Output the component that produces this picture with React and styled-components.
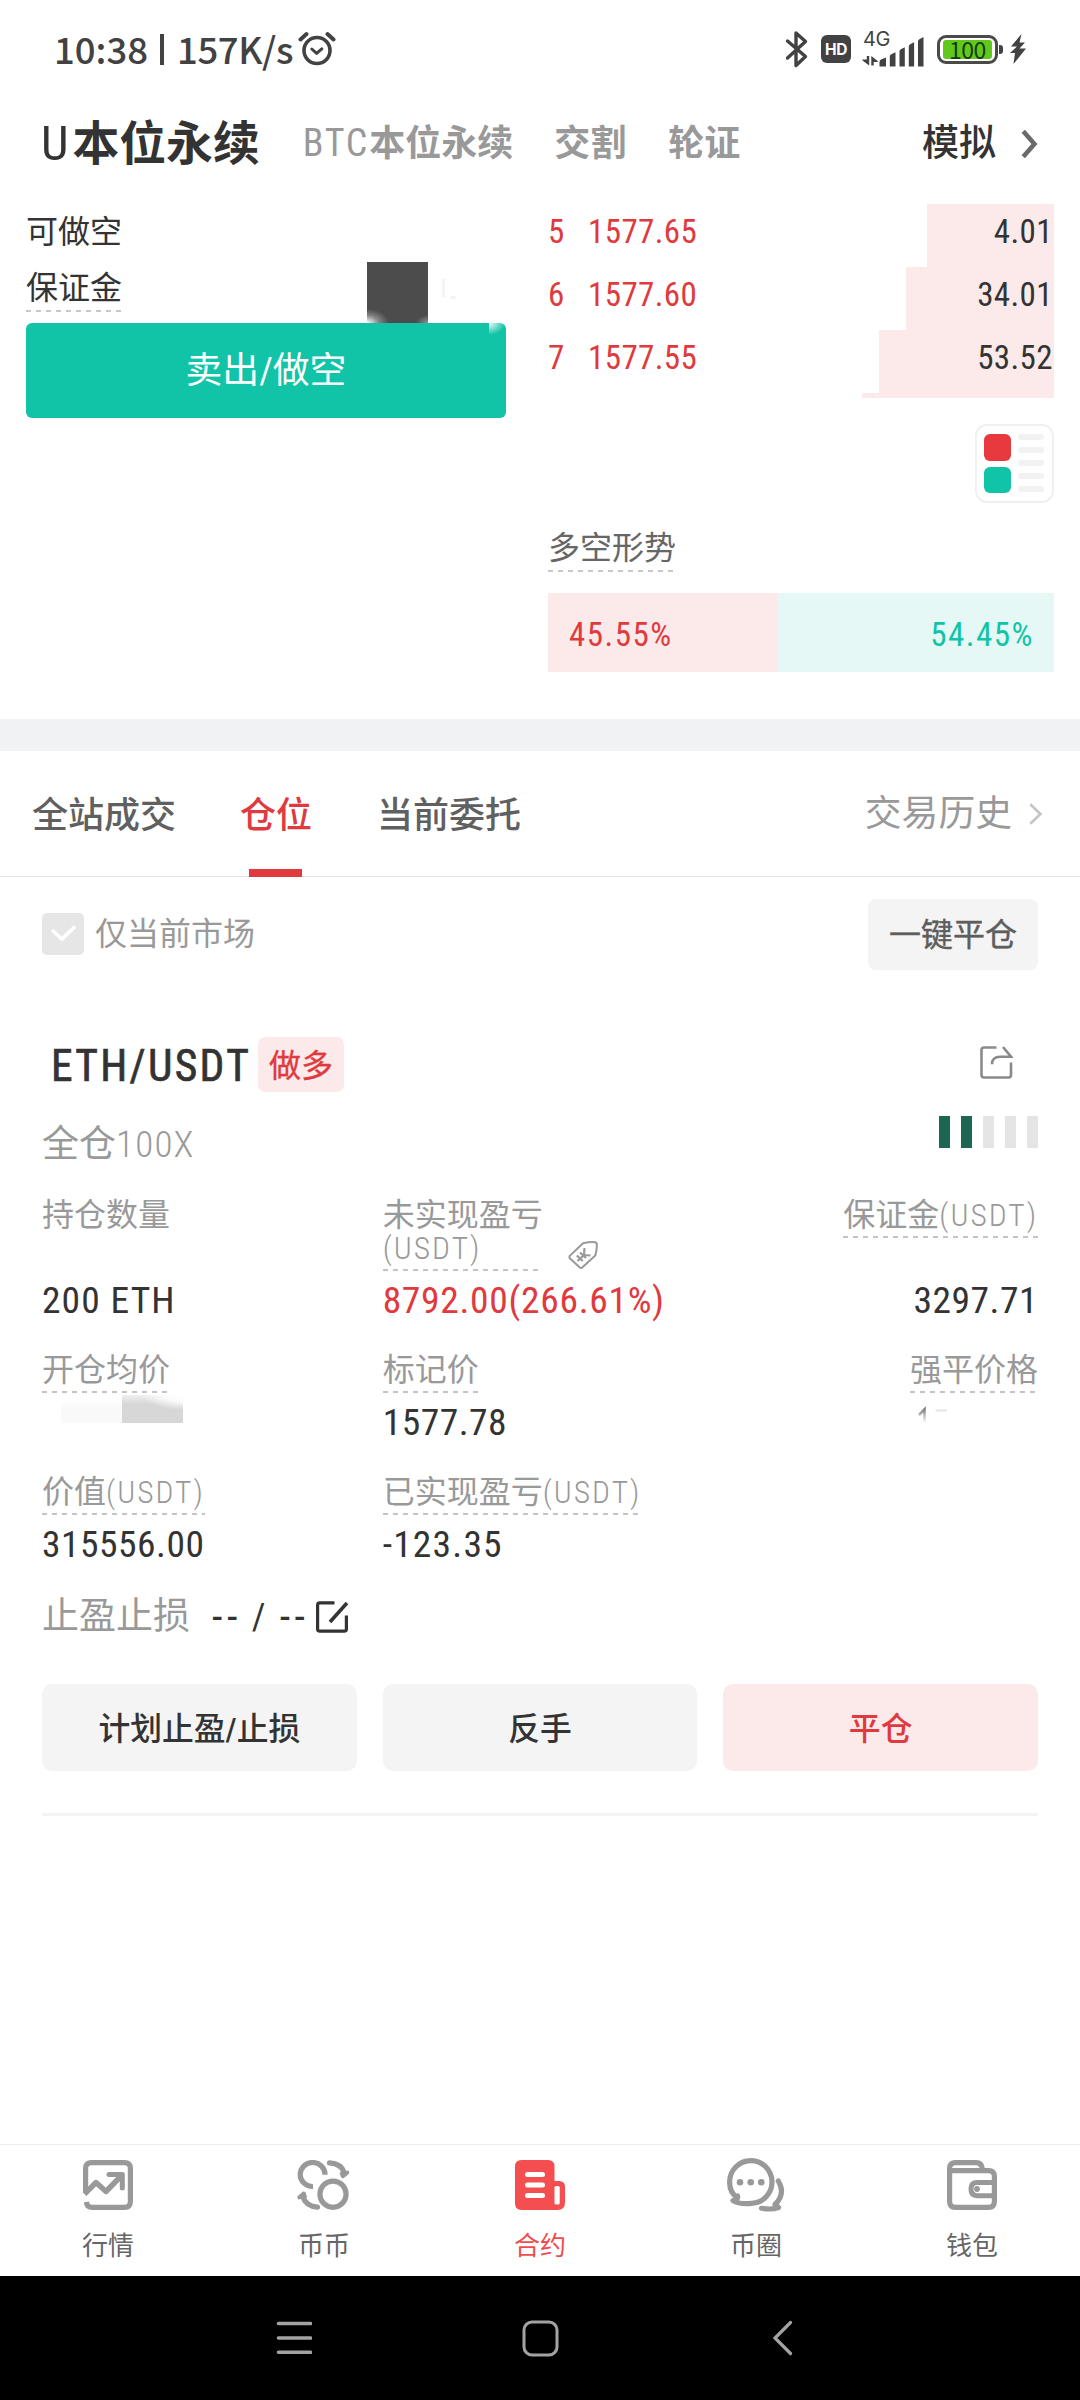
import React from "react";
import styled, { createGlobalStyle } from "styled-components";

const GlobalStyle = createGlobalStyle`
  *, *::before, *::after { box-sizing: border-box; }
  body {
    margin: 0;
    background: #fff;
    font-family: "Roboto Condensed", Roboto, "Noto Sans CJK SC", sans-serif;
  }
`;

const ink = "#333";
const mid = "#666";
const soft = "#999";
const red = "#e0393e";
const redTint = "#fceaea";
const green = "#11c4a7";
const greenTint = "#e5f8f5";

const Screen = styled.div`
  width: 1080px;
  height: 2400px;
  display: flex;
  flex-direction: column;
  background: #fff;
  color: ${ink};
  overflow: hidden;
`;

const Lat = styled.span`
  font-family: "Roboto Condensed", Roboto, sans-serif;
  font-weight: ${(p) => p.$w || 400};
  font-size: ${(p) => (p.$s ? `${p.$s}px` : "inherit")};
  letter-spacing: ${(p) => p.$ls || 0}px;
`;

/* ---------- status bar ---------- */

const StatusBar = styled.div`
  height: 98px;
  flex: none;
  display: flex;
  align-items: center;
  justify-content: space-between;
  padding: 0 54px 0 54px;
  color: #424242;
`;

const StatusLeft = styled.div`
  display: flex;
  align-items: center;
  font-family: "Noto Sans CJK SC", sans-serif;
  font-weight: 500;
  font-size: 36.5px;
  line-height: 50px;
`;

const Clock = styled.span`
  width: 105px;
`;

const Divider = styled.span`
  width: 4px;
  height: 31px;
  background: #424242;
  margin-right: 13px;
  margin-left: 1px;
`;

const Speed = styled.span`
  letter-spacing: -0.4px;
  width: 121px;
`;

const StatusRight = styled.div`
  display: flex;
  align-items: center;
  height: 40px;
`;

const HdBadge = styled.div`
  width: 30px;
  height: 28px;
  margin-left: 12px;
  border-radius: 6px;
  background: #424242;
  color: #fff;
  font: 700 15.5px/29px Inter, sans-serif;
  text-align: center;
  letter-spacing: -0.3px;
`;

const Network = styled.div`
  width: 62px;
  height: 36px;
  margin-left: 11px;
  position: relative;
`;

const NetworkType = styled.span`
  position: absolute;
  left: 1px;
  top: -2px;
  font: 400 20px/20px Inter, sans-serif;
  letter-spacing: -0.5px;
`;

const Battery = styled.div`
  width: 61px;
  height: 29px;
  margin-left: 13px;
  border: 3px solid #4a4a4a;
  border-radius: 9px;
  padding: 2px 3px;
`;

const BatteryFill = styled.div`
  height: 19px;
  border-radius: 3px;
  background: #63c81e;
  color: #143c08;
  font: 400 23px/18px "Noto Sans CJK SC", sans-serif;
  text-align: center;
  letter-spacing: -0.5px;
`;

const BatteryTip = styled.div`
  width: 4px;
  height: 9px;
  margin: 0 7px 0 1px;
  border-radius: 0 3px 3px 0;
  background: #424242;
`;

/* ---------- market header ---------- */

const Header = styled.div`
  height: 106px;
  flex: none;
  display: flex;
  align-items: center;
  padding: 0 41px 15px 41px;
`;

const MarketTab = styled.div`
  font-size: ${(p) => (p.$active ? 46.800 : 36)}px;
  line-height: 60px;
  font-weight: 700;
  color: ${(p) => (p.$active ? ink : soft)};
  margin-right: ${(p) => p.$gap}px;
  white-space: nowrap;
`;

const Simulate = styled.div`
  margin-left: auto;
  display: flex;
  align-items: center;
  gap: 25px;
  font-size: 37px;
  line-height: 60px;
  font-weight: 500;
`;

/* ---------- trade area ---------- */

const Trade = styled.div`
  height: 515px;
  flex: none;
  display: flex;
  justify-content: space-between;
  padding: 0 26px;
`;

const OrderForm = styled.div`
  width: 480px;
`;

const FormRow = styled.div`
  height: ${(p) => p.$h}px;
  display: flex;
  justify-content: space-between;
  align-items: flex-start;
  padding-top: ${(p) => p.$pt || 0}px;
`;

const dashes = (color) =>
  `repeating-linear-gradient(90deg, ${color} 0 5px, transparent 5px 10px)`;

const FieldLabel = styled.div`
  margin-top: ${(p) => p.$mt || 0}px;
  font-size: 32px;
  line-height: 45px;
  color: ${(p) => p.$color || ink};
  padding-bottom: 1px;
  background: ${(p) => (p.$dashed ? dashes("#c8c8c8") : "none")} left bottom / 100% 2px no-repeat;
`;

const Redacted = styled.div`
  width: 139px;
  height: 61px;
  display: flex;
  align-items: flex-start;
`;

const RedactedBlock = styled.div`
  width: 61px;
  height: 61px;
  background:
    radial-gradient(ellipse 22px 14px at 0 100%, #fff 0, rgba(255, 255, 255, 0.3) 55%, transparent 100%),
    radial-gradient(ellipse 12px 8px at 100% 100%, rgba(255, 255, 255, 0.4) 0, transparent 100%),
    #4c4c4c;
`;

const Smudge = styled.div`
  width: 3px;
  height: 20px;
  margin: 16px 0 0 14px;
  border-radius: 2px;
  background: #f5f5f5;
`;

const SmudgeDot = styled.div`
  width: 6px;
  height: 3px;
  margin: 34px 0 0 5px;
  border-radius: 2px;
  background: #f3f3f3;
`;

const SellButton = styled.button`
  display: block;
  width: 480px;
  height: 95px;
  border: 0;
  border-radius: 6px;
  background:
    radial-gradient(ellipse 16px 12px at 0 0, rgba(255, 255, 255, 0.95), rgba(255, 255, 255, 0) 100%) 463px 0 / 17px 13px no-repeat,
    ${green};
  color: #fff;
  font: 400 36.800px/96px "Roboto Condensed", "Noto Sans CJK SC", sans-serif;
  padding: 0;
`;

const Book = styled.div`
  width: 506px;
  display: flex;
  flex-direction: column;
`;

const DepthRow = styled.div`
  height: 63px;
  display: flex;
  align-items: center;
  padding: 0 1px 8px 0;
  background: linear-gradient(${redTint}, ${redTint}) right top / ${(p) => p.$depth}px 100% no-repeat;
  font-size: 33px;
  line-height: 44px;
  letter-spacing: 0.4px;
`;

const DepthLevel = styled.span`
  width: 40px;
  color: ${red};
`;

const DepthPrice = styled.span`
  color: ${red};
`;

const DepthAmount = styled.span`
  margin-left: auto;
`;

const DepthSliver = styled.div`
  width: 192px;
  height: 5px;
  align-self: flex-end;
  background: ${redTint};
`;

const DepthMode = styled.div`
  width: 79px;
  height: 79px;
  margin: 26px 0 23px;
  align-self: flex-end;
  border: 2px solid #f0f0f0;
  border-radius: 12px;
  display: flex;
  justify-content: space-between;
  padding: 8px 8px 8px 7px;
`;

const ModeColumn = styled.div`
  width: 27px;
  display: flex;
  flex-direction: column;
  gap: 6px;
`;

const ModeSquare = styled.div`
  height: 27px;
  border-radius: 6px;
  background: ${(p) => p.$color};
`;

const ModeLines = styled.div`
  width: 26px;
  display: flex;
  flex-direction: column;
  gap: 7px;
`;

const ModeLine = styled.div`
  height: 6px;
  border-radius: 3px;
  background: #f2f2f2;
`;

const Ratio = styled.div`
  height: 79px;
  margin-top: 21px;
  display: flex;
  font-size: 33px;
  line-height: 84px;
  letter-spacing: 1.5px;
`;

const RatioLong = styled.div`
  width: 45.55%;
  padding-left: 21px;
  background: ${redTint};
  color: ${red};
`;

const RatioShort = styled.div`
  flex: 1;
  padding-right: 20px;
  text-align: right;
  background: ${greenTint};
  color: ${green};
`;

/* ---------- position tabs ---------- */

const Band = styled.div`
  height: 32px;
  flex: none;
  background: #f1f2f4;
`;

const Tabs = styled.div`
  height: 126px;
  flex: none;
  display: flex;
  align-items: stretch;
  padding: 0 37px 0 32px;
  border-bottom: 1px solid #e3e3e3;
`;

const Tab = styled.div`
  position: relative;
  margin-right: ${(p) => p.$gap}px;
  font-size: 36px;
  font-weight: 500;
  line-height: 130px;
  color: ${(p) => (p.$active ? red : "#606060")};
  &::after {
    content: "";
    display: ${(p) => (p.$active ? "block" : "none")};
    position: absolute;
    left: 9px;
    bottom: -1px;
    width: 53px;
    height: 8px;
    background: ${red};
  }
`;

const History = styled.div`
  margin-left: auto;
  display: flex;
  align-items: center;
  gap: 17px;
  font-size: 36.8px;
  line-height: 130px;
  color: ${soft};
`;

/* ---------- position list ---------- */

const Filter = styled.div`
  margin: 22px 42px 0;
  height: 71px;
  flex: none;
  display: flex;
  align-items: center;
  font-size: 32px;
  line-height: 73px;
  color: ${soft};
`;

const CheckBox = styled.div`
  width: 42px;
  height: 42px;
  margin: 0 11px 2px 0;
  border-radius: 5px;
  background: #e6e6e6;
  display: flex;
`;

const CloseAll = styled.button`
  margin-left: auto;
  width: 170px;
  height: 71px;
  border: 0;
  border-radius: 8px;
  background: #f4f4f4;
  color: #5e5e5e;
  font: 400 32px/73px "Roboto Condensed", "Noto Sans CJK SC", sans-serif;
  -webkit-text-stroke: 0.4px #5e5e5e;
  padding: 0;
`;

const Card = styled.div`
  margin: 67px 42px 0;
  border-bottom: 3px solid #f4f4f4;
  padding-bottom: 42px;
`;

const CardHead = styled.div`
  height: 55px;
  display: flex;
  align-items: center;
  padding: 0 25px 0 9px;
`;

const Pair = styled.div`
  width: 207px;
  font-size: 43.5px;
  line-height: 58px;
  font-weight: 400;
  letter-spacing: 2.3px;
  padding-top: 5px;
  white-space: nowrap;
  -webkit-text-stroke: 0.7px ${ink};
`;

const Side = styled.div`
  width: 86px;
  height: 55px;
  border-radius: 7px;
  background: ${redTint};
  color: ${red};
  font-size: 32px;
  line-height: 59px;
  text-align: center;
  -webkit-text-stroke: 0.3px ${red};
`;

const ShareSlot = styled.div`
  margin-left: auto;
  height: 47px;
  margin-bottom: 4px;
  display: flex;
  align-items: center;
`;

const Leverage = styled.div`
  margin-top: 24px;
  height: 54px;
  display: flex;
  justify-content: space-between;
  font-size: 37px;
  line-height: 58px;
  color: ${soft};
`;

const Risk = styled.div`
  display: flex;
  gap: 11px;
`;

const RiskBar = styled.span`
  width: 11px;
  height: 32px;
  background: ${(p) => (p.$on ? "#1d6652" : "#e5e5e5")};
`;

const Metrics = styled.div`
  margin-top: 28px;
  display: grid;
  grid-template-columns: repeat(3, 1fr);
  column-gap: 26px;
  row-gap: 30px;
`;

const Metric = styled.div`
  display: flex;
  flex-direction: column;
  align-items: ${(p) => (p.$end ? "flex-end" : "flex-start")};
`;

const MetricTop = styled.div`
  min-height: ${(p) => p.$min || 41}px;
  display: flex;
  align-items: flex-start;
`;

const MetricLabel = styled.div`
  font-size: 32px;
  line-height: 33px;
  color: ${soft};
  white-space: nowrap;
  padding: 1px 0 6px;
  background: ${(p) => (p.$dashed ? dashes("#c4c4c4") : "none")} left bottom / 100% 2px no-repeat;
`;

const TagSlot = styled.div`
  margin: 43px 0 0 25px;
  height: 28px;
  display: flex;
`;

const MetricValue = styled.div`
  margin-top: 5px;
  height: 46px;
  font-size: 37.5px;
  line-height: 46px;
  letter-spacing: ${(p) => p.$ls || 0.5}px;
  white-space: nowrap;
  color: ${(p) => (p.$red ? red : ink)};
`;

const HiddenPrice = styled.div`
  margin: 0 0 0 19px;
  height: 29px;
  display: flex;
  align-items: flex-end;
`;

const PaleBlur = styled.div`
  width: 61px;
  height: 23px;
  background: linear-gradient(#fff, #f9f9f9 40%);
`;

const GreyBlur = styled.div`
  width: 61px;
  height: 28px;
  background:
    radial-gradient(ellipse 40px 15px at 100% 0, #fff 0, rgba(255, 255, 255, 0.85) 45%, transparent 100%),
    linear-gradient(#f0f0f0, #d7d7d7 32%);
`;

const FadedPrice = styled.div`
  margin-top: 5px;
  width: 121px;
  height: 46px;
  display: flex;
  align-items: flex-start;
`;

const StopRow = styled.div`
  margin-top: 25px;
  height: 50px;
  display: flex;
  align-items: center;
  font-size: 37px;
  line-height: 54px;
`;

const StopLabel = styled.span`
  width: 170px;
  color: ${soft};
`;

const StopValue = styled.span`
  width: 104px;
  padding-right: 11px;
  display: flex;
  align-items: center;
  justify-content: space-between;
  white-space: nowrap;
`;

const Dashes = styled.span`
  letter-spacing: 4.5px;
  margin-right: -4.5px;
  font-size: 42px;
`;

const Actions = styled.div`
  margin-top: 42px;
  display: grid;
  grid-template-columns: repeat(3, 1fr);
  column-gap: 26px;
`;

const Action = styled.button`
  height: 87px;
  border: 0;
  border-radius: 10px;
  padding: 0;
  font: 500 31.800px/90px "Roboto Condensed", "Noto Sans CJK SC", sans-serif;
  background: ${(p) => (p.$danger ? redTint : "#f4f4f4")};
  color: ${(p) => (p.$danger ? red : ink)};
`;

/* ---------- bottom bars ---------- */

const Spacer = styled.div`
  flex: 1;
`;

const Nav = styled.div`
  height: 132px;
  flex: none;
  display: flex;
  border-top: 1px solid #ececec;
`;

const NavItem = styled.div`
  flex: 1;
  display: flex;
  flex-direction: column;
  align-items: center;
  padding-top: 12px;
  font-size: 26px;
  line-height: 36px;
  color: ${(p) => (p.$active ? "#f04c4f" : mid)};
`;

const NavIcon = styled.div`
  height: 56px;
  margin-bottom: 15px;
  display: flex;
  align-items: center;
`;

const SystemBar = styled.div`
  height: 124px;
  flex: none;
  background: #000;
  display: flex;
  align-items: center;
  justify-content: space-between;
  padding: 0 287px 0 276px;
`;

/* ---------- drawings ---------- */

const AlarmIcon = () => (
  <svg width="38" height="36" viewBox="0 0 38 36" fill="none" stroke="#424242" strokeLinecap="round">
    <circle cx="19" cy="19.5" r="13" strokeWidth="3.6" />
    <path d="M13.8 18l4.8 4.4 5.2-4.6" strokeWidth="3" strokeLinejoin="round" />
    <path d="M2.5 8.5L8.5 3M35.5 8.5L29.5 3" strokeWidth="4" />
  </svg>
);

const BluetoothIcon = () => (
  <svg width="24" height="38" viewBox="0 0 24 38" fill="none" stroke="#424242" strokeWidth="3.4" strokeLinecap="round" strokeLinejoin="round">
    <path d="M2.5 11L20.5 26.5 11 35.5V3L20.5 11.5 2.5 28" />
  </svg>
);

const SignalIcon = () => (
  <svg width="62" height="36" viewBox="0 0 62 36" fill="#424242">
    <path d="M17.5 35.5v-4.5q0-2 2-2.8l4.500-1.700v9zM27.8 35.5V25.5q0-2 2-2.6l3.700-1.600v14.200zM37.5 35.5V20.5q0-2 1.8-2.6l3.500-1.600v19.200zM46.8 35.5V15.5q0-2 1.8-2.6l3.500-1.600v24.200zM56 35.5V10.5q0-2 1.8-2.6l3.700-1.800v29.400z" />
    <path d="M4.8 25h2.400v9.500L.5 29.500v-1h4.300zM9.300 34.500h2.400V31h4v-1L9.300 25z" />
  </svg>
);

const BoltIcon = () => (
  <svg width="16" height="30" viewBox="0 0 16 30" fill="#424242">
    <path d="M11.5 0L1 12.500h6L0 19h5L3.500 30 16 14.500H9.500L15 8.500H9.500z" />
  </svg>
);

const Chevron = ({ w, h, stroke, color }) => (
  <svg width={w} height={h} viewBox={`0 0 ${w} ${h}`} fill="none" stroke={color} strokeWidth={stroke}>
    <path d={`M${stroke / 2} ${stroke / 2}L${w - stroke} ${h / 2}L${stroke / 2} ${h - stroke / 2}`} />
  </svg>
);

const CheckIcon = () => (
  <svg width="42" height="42" viewBox="0 0 42 42" fill="none" stroke="#fff" strokeWidth="3.6">
    <path d="M10 17l10 9L33 13.500" />
  </svg>
);

const ShareIcon = () => (
  <svg width="33" height="33" viewBox="0 0 33 33" fill="none" stroke="#8a8a8a" strokeWidth="2.6">
    <path d="M16.5 1.500H4Q1.500 1.500 1.500 4v25q0 2.500 2.500 2.500h24.500q2.500 0 2.500-2.500V16.500" />
    <path d="M23 1l8 9.700H20q-8 0-8 7.500" />
  </svg>
);

const TagIcon = () => (
  <svg width="30" height="28" viewBox="0 0 30 28" fill="none" stroke={soft} strokeWidth="2" strokeLinejoin="round">
    <path d="M15 2.200Q22 .8 27 1.200Q29 1.400 28.800 4Q29 9 27.300 14.500L14.500 26.300Q13 27.600 11.500 26.300L2 17.500Q.8 16 2 14.600z" />
    <path d="M9.500 20L16 14M16 14l.5-7M16 14l6.500.5M8.800 14.500l6 5.500M12 11.500l6 5.500" strokeWidth="2.2" />
  </svg>
);

const EditIcon = () => (
  <svg width="32" height="32" viewBox="0 0 32 32" fill="none" stroke={ink} strokeWidth="3.2">
    <path d="M18.5 1.800H3.800Q1.600 1.800 1.600 4v24q0 2.200 2.200 2.200h24.400q2.200 0 2.200-2.200V14.500" />
    <path d="M14 21L31 2" strokeWidth="3.600" />
  </svg>
);

const FadedOneIcon = () => (
  <svg width="34" height="26" viewBox="0 0 34 26" fill="none">
    <defs>
      <linearGradient id="fadeOut" x1="0" y1="9" x2="0" y2="24" gradientUnits="userSpaceOnUse">
        <stop offset="0" stopColor="#777" />
        <stop offset="1" stopColor="#fff" />
      </linearGradient>
    </defs>
    <path d="M2 16L7.500 10.500V25" stroke="url(#fadeOut)" strokeWidth="2.600" />
    <path d="M18.500 11.500H30" stroke="#e4e4e4" strokeWidth="2" />
  </svg>
);

const MarketIcon = () => (
  <svg width="50" height="50" viewBox="0 0 50 50" fill="none" stroke={soft} strokeWidth="5.2" strokeLinejoin="round">
    <path d="M2.600 33V8.500q0-5.900 5.900-5.900h33q5.900 0 5.900 5.900v33q0 5.900-5.900 5.900H9q-5 0-5.600-5.500" />
    <path d="M1.500 34L13 22.500l10 9L39 15" strokeWidth="5.4" />
    <path d="M26 14.500H39.300V28" strokeWidth="5" strokeLinecap="round" />
  </svg>
);

const ExchangeIcon = () => (
  <svg width="54" height="50" viewBox="0 0 54 50" fill="none" stroke={soft} strokeWidth="5.2">
    <path d="M28 14.800A12.400 12 0 1 0 16 26.500" />
    <circle cx="36" cy="34.2" r="13.1" />
    <path d="M32.500 2.800Q44.500 3.500 47.500 13" strokeLinecap="round" />
    <path d="M42.500 12.500L51.500 10.500Q53 12 51.800 14L46.500 18.300Q44.500 18.500 44 17z" fill={soft} stroke="none" />
    <path d="M20.500 47.200Q8.500 46 5.800 36.500" strokeLinecap="round" />
    <path d="M10.200 37.500L1.500 39.500Q-.3 38 .8 36L6 31.500Q8.500 31 8.800 33z" fill={soft} stroke="none" />
  </svg>
);

const ContractIcon = () => (
  <svg width="50" height="50" viewBox="0 0 50 50">
    <path fill="#f44e50" d="M6.500 0H33q6.500 0 6.500 6.500V21H44q6 0 6 6v15.500q0 7.500-7.500 7.500h-36Q0 50 0 43.500v-37Q0 0 6.500 0z" />
    <path d="M12.500 14.500H27.500M12.500 25H27.500M12.500 35.500H27.500" stroke="#fff" strokeWidth="5" strokeLinecap="round" />
    <rect x="39.5" y="26" width="5.2" height="18.5" rx="1.5" fill="#fff" />
  </svg>
);

const CircleIcon = () => (
  <svg width="58" height="54" viewBox="0 0 58 54" fill="none" stroke={soft} strokeWidth="5.2" strokeLinecap="round" strokeLinejoin="round">
    <path d="M10.500 39.500C5 36.500 2.600 30 2.600 24A21.200 21.400 0 1 1 24.500 45.400Q12 46.500 6 42.600Q11.500 42 10.500 38" />
    <path d="M51.300 23Q59 36 48 46.500L51.500 49.500Q45 52 34.500 50.300" />
    <g fill={soft} stroke="none">
      <circle cx="13" cy="24.3" r="3.3" />
      <circle cx="23.7" cy="24.3" r="3.3" />
      <circle cx="34.2" cy="24.3" r="3.3" />
    </g>
  </svg>
);

const WalletIcon = () => (
  <svg width="50" height="50" viewBox="0 0 50 50" fill="none" stroke={soft} strokeWidth="5.2">
    <path d="M2.600 10.600H41.500q5.900 0 5.900 5.900v25q0 5.900-5.900 5.900h-33q-5.900 0-5.900-5.900V8.500q0-5.900 5.900-5.900H29q5.900 0 6.500 7" />
    <path d="M47 22.500H30q-6 0-6 6.600t6 6.600h17" strokeWidth="5" />
    <circle cx="30" cy="29" r="2.9" fill={soft} stroke="none" />
  </svg>
);

const MenuKey = () => (
  <svg width="36" height="34" viewBox="0 0 36 34" stroke="#a3a3a3" strokeWidth="3.6" strokeLinecap="round">
    <path d="M2.500 2.500H34.500M2.500 17H34.500M2.500 31.300H34.500" />
  </svg>
);

const HomeKey = () => (
  <svg width="42" height="37" viewBox="0 0 42 37" fill="none" stroke="#a3a3a3" strokeWidth="3">
    <rect x="2" y="2" width="33" height="33" rx="8" />
  </svg>
);

const BackKey = () => (
  <svg width="20" height="36" viewBox="0 0 20 36" fill="none" stroke="#a3a3a3" strokeWidth="3.2" strokeLinecap="round">
    <path d="M17.500 2.500L2 18l15.500 15.500" />
  </svg>
);

/* ---------- data ---------- */

const asks = [
  { level: 5, price: "1577.65", amount: "4.01", depth: 127 },
  { level: 6, price: "1577.60", amount: "34.01", depth: 148 },
  { level: 7, price: "1577.55", amount: "53.52", depth: 175 },
];

const navItems = [
  { label: "行情", icon: <MarketIcon /> },
  { label: "币币", icon: <ExchangeIcon /> },
  { label: "合约", icon: <ContractIcon />, active: true },
  { label: "币圈", icon: <CircleIcon /> },
  { label: "钱包", icon: <WalletIcon /> },
];

const Usdt = () => <Lat $ls={2} $s={31.5} $w={300}>(USDT)</Lat>;

export default function App() {
  return (
    <Screen>
      <GlobalStyle />
      <StatusBar>
        <StatusLeft>
          <Clock>10:38</Clock>
          <Divider />
          <Speed>157K/s</Speed>
          <AlarmIcon />
        </StatusLeft>
        <StatusRight>
          <BluetoothIcon />
          <HdBadge>HD</HdBadge>
          <Network>
            <NetworkType>4G</NetworkType>
            <SignalIcon />
          </Network>
          <Battery>
            <BatteryFill>100</BatteryFill>
          </Battery>
          <BatteryTip />
          <BoltIcon />
        </StatusRight>
      </StatusBar>

      <Header>
        <MarketTab $active $gap={43}>
          <Lat $s={49} $ls={4}>U</Lat>本位永续
        </MarketTab>
        <MarketTab $gap={41}>
          <Lat $s={38} $ls={1.8}>BTC</Lat>本位永续
        </MarketTab>
        <MarketTab $gap={42}>交割</MarketTab>
        <MarketTab $gap={0}>轮证</MarketTab>
        <Simulate>
          模拟
          <Chevron w={18} h={30} stroke={4.6} color="#6a6a6a" />
        </Simulate>
      </Header>

      <Trade>
        <OrderForm>
          <FormRow $h={58} $pt={6}>
            <FieldLabel>可做空</FieldLabel>
          </FormRow>
          <FormRow $h={61}>
            <FieldLabel $dashed $mt={4}>保证金</FieldLabel>
            <Redacted>
              <RedactedBlock />
              <Smudge />
              <SmudgeDot />
            </Redacted>
          </FormRow>
          <SellButton>卖出/做空</SellButton>
        </OrderForm>
        <Book>
          {asks.map((a) => (
            <DepthRow key={a.level} $depth={a.depth}>
              <DepthLevel>{a.level}</DepthLevel>
              <DepthPrice>{a.price}</DepthPrice>
              <DepthAmount>{a.amount}</DepthAmount>
            </DepthRow>
          ))}
          <DepthSliver />
          <DepthMode>
            <ModeColumn>
              <ModeSquare $color="#e8393e" />
              <ModeSquare $color={green} />
            </ModeColumn>
            <ModeLines>
              <ModeLine />
              <ModeLine />
              <ModeLine />
              <ModeLine />
              <ModeLine />
            </ModeLines>
          </DepthMode>
          <FormRow $h={46}>
            <FieldLabel $dashed $color={mid}>多空形势</FieldLabel>
          </FormRow>
          <Ratio>
            <RatioLong>45.55%</RatioLong>
            <RatioShort>54.45%</RatioShort>
          </Ratio>
        </Book>
      </Trade>

      <Band />
      <Tabs>
        <Tab $gap={64}>全站成交</Tab>
        <Tab $active $gap={65}>仓位</Tab>
        <Tab $gap={0}>当前委托</Tab>
        <History>
          交易历史
          <Chevron w={14} h={22} stroke={2.6} color="#c4c4c4" />
        </History>
      </Tabs>

      <Filter>
        <CheckBox>
          <CheckIcon />
        </CheckBox>
        仅当前市场
        <CloseAll>一键平仓</CloseAll>
      </Filter>

      <Card>
        <CardHead>
          <Pair>ETH/USDT</Pair>
          <Side>做多</Side>
          <ShareSlot>
            <ShareIcon />
          </ShareSlot>
        </CardHead>
        <Leverage>
          <span>全仓<Lat $ls={1.2} $w={300}>100X</Lat></span>
          <Risk>
            <RiskBar $on />
            <RiskBar $on />
            <RiskBar />
            <RiskBar />
            <RiskBar />
          </Risk>
        </Leverage>
        <Metrics>
          <Metric>
            <MetricTop $min={74}>
              <MetricLabel>持仓数量</MetricLabel>
            </MetricTop>
            <MetricValue $ls={1.1}>200 ETH</MetricValue>
          </Metric>
          <Metric>
            <MetricTop $min={74}>
              <MetricLabel $dashed>
                未实现盈亏
                <br />
                <Usdt />
              </MetricLabel>
              <TagSlot>
                <TagIcon />
              </TagSlot>
            </MetricTop>
            <MetricValue $red $ls={0.7}>8792.00(266.61%)</MetricValue>
          </Metric>
          <Metric $end>
            <MetricTop $min={74}>
              <MetricLabel $dashed>保证金<Usdt /></MetricLabel>
            </MetricTop>
            <MetricValue>3297.71</MetricValue>
          </Metric>

          <Metric>
            <MetricTop>
              <MetricLabel $dashed>开仓均价</MetricLabel>
            </MetricTop>
            <HiddenPrice>
              <PaleBlur />
              <GreyBlur />
            </HiddenPrice>
          </Metric>
          <Metric>
            <MetricTop>
              <MetricLabel $dashed>标记价</MetricLabel>
            </MetricTop>
            <MetricValue>1577.78</MetricValue>
          </Metric>
          <Metric $end>
            <MetricTop>
              <MetricLabel $dashed>强平价格</MetricLabel>
            </MetricTop>
            <FadedPrice>
              <FadedOneIcon />
            </FadedPrice>
          </Metric>

          <Metric>
            <MetricTop>
              <MetricLabel $dashed>价值<Usdt /></MetricLabel>
            </MetricTop>
            <MetricValue>315556.00</MetricValue>
          </Metric>
          <Metric>
            <MetricTop>
              <MetricLabel $dashed>已实现盈亏<Usdt /></MetricLabel>
            </MetricTop>
            <MetricValue $ls={1.2}>-123.35</MetricValue>
          </Metric>
        </Metrics>
        <StopRow>
          <StopLabel>止盈止损</StopLabel>
          <StopValue>
            <Dashes>--</Dashes>
            <span>/</span>
            <Dashes>--</Dashes>
          </StopValue>
          <EditIcon />
        </StopRow>
        <Actions>
          <Action>计划止盈/止损</Action>
          <Action>反手</Action>
          <Action $danger>平仓</Action>
        </Actions>
      </Card>

      <Spacer />
      <Nav>
        {navItems.map((n) => (
          <NavItem key={n.label} $active={n.active}>
            <NavIcon>{n.icon}</NavIcon>
            {n.label}
          </NavItem>
        ))}
      </Nav>
      <SystemBar>
        <MenuKey />
        <HomeKey />
        <BackKey />
      </SystemBar>
    </Screen>
  );
}
